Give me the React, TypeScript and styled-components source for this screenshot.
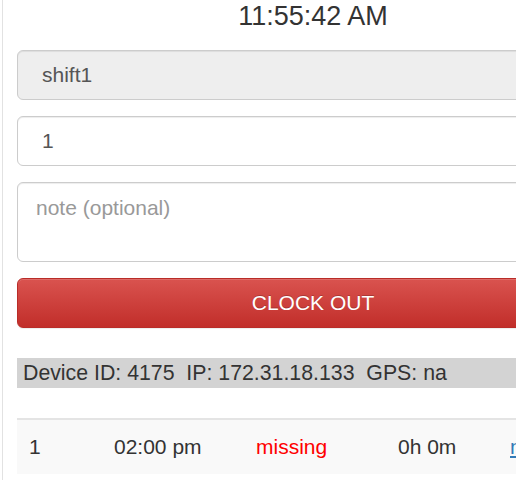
import styled, { createGlobalStyle } from 'styled-components';

const GlobalStyle = createGlobalStyle`
  html, body {
    margin: 0;
    padding: 0;
    overflow: hidden;
    background: #fff;
  }
  body {
    font-family: "Liberation Sans", Arial, Helvetica, sans-serif;
    color: #333;
  }
`;

const entries = [
  { num: '1', time: '02:00 pm', status: 'missing', total: '0h 0m', link: 'note' },
];

const App = () => {
  return (
    <>
      <GlobalStyle />
      <Page>
        <Clock>11:55:42 AM</Clock>
        <Field readOnly value="shift1" $disabled />
        <Field defaultValue="1" />
        <Note placeholder="note (optional)" />
        <ClockButton type="button">CLOCK OUT</ClockButton>
        <DeviceBar>
          Device ID: 4175&nbsp;&nbsp;IP: 172.31.18.133&nbsp;&nbsp;GPS: na
        </DeviceBar>
        <Table>
          <tbody>
            {entries.map((e) => (
              <Row key={e.num}>
                <Cell $width={85}>{e.num}</Cell>
                <Cell $width={142}>{e.time}</Cell>
                <Cell $width={142} $color="#f00">
                  {e.status}
                </Cell>
                <Cell $width={112}>{e.total}</Cell>
                <Cell>
                  <Link href="#">{e.link}</Link>
                </Cell>
              </Row>
            ))}
          </tbody>
        </Table>
      </Page>
    </>
  );
};

export default App;

const Page = styled.div`
  margin-left: 2px;
  border-left: 1px solid #e2e2e2;
  padding: 1px 14px 0;
  width: 592px;
  min-height: 480px;
  display: flex;
  flex-direction: column;
`;

const Clock = styled.div`
  font-size: 27px;
  line-height: 30px;
  text-align: center;
  color: #333;
  margin-bottom: 19px;
`;

const Field = styled.input<{ $disabled?: boolean }>`
  box-sizing: border-box;
  width: 100%;
  height: 50px;
  padding: 0 24px;
  margin: 0 0 16px;
  font-family: inherit;
  font-size: 21px;
  color: #555;
  background: ${(p) => (p.$disabled ? '#eee' : '#fff')};
  border: 1px solid #ccc;
  border-radius: 6px;
  box-shadow: inset 0 1px 1px rgba(0, 0, 0, 0.075);
  outline: none;
`;

const Note = styled.textarea`
  box-sizing: border-box;
  width: 100%;
  height: 80px;
  padding: 10px 18px;
  margin: 0 0 16px;
  font-family: inherit;
  font-size: 21px;
  line-height: 30px;
  color: #555;
  border: 1px solid #ccc;
  border-radius: 6px;
  box-shadow: inset 0 1px 1px rgba(0, 0, 0, 0.075);
  resize: none;
  outline: none;
  display: block;

  &::placeholder {
    color: #999;
  }
`;

const ClockButton = styled.button`
  box-sizing: border-box;
  width: 100%;
  height: 50px;
  margin: 0 0 30px;
  font-family: inherit;
  font-size: 21px;
  color: #fff;
  background: linear-gradient(to bottom, #d9534f 0, #c12e2a 100%);
  border: 1px solid #b92c28;
  border-radius: 6px;
  box-shadow: inset 0 1px 0 rgba(255, 255, 255, 0.15), 0 1px 1px rgba(0, 0, 0, 0.075);
  text-shadow: 0 -1px 0 rgba(0, 0, 0, 0.2);
  cursor: pointer;
`;

const DeviceBar = styled.div`
  background: #d3d3d3;
  font-size: 21.3px;
  line-height: 30px;
  padding: 0 6px;
  color: #333;
  white-space: nowrap;
  margin-bottom: 30px;
`;

const Table = styled.table`
  width: 100%;
  border-collapse: collapse;
  border-spacing: 0;
  border-top: 2px solid #e4e4e4;
`;

const Row = styled.tr`
  background: #f9f9f9;
`;

const Cell = styled.td<{ $width?: number; $color?: string }>`
  width: ${(p) => (p.$width ? `${p.$width - 24}px` : 'auto')};
  padding: 12px;
  font-size: 21px;
  line-height: 30px;
  color: ${(p) => p.$color ?? '#333'};
  white-space: nowrap;
`;

const Link = styled.a`
  color: #337ab7;
  text-decoration: underline;
`;
